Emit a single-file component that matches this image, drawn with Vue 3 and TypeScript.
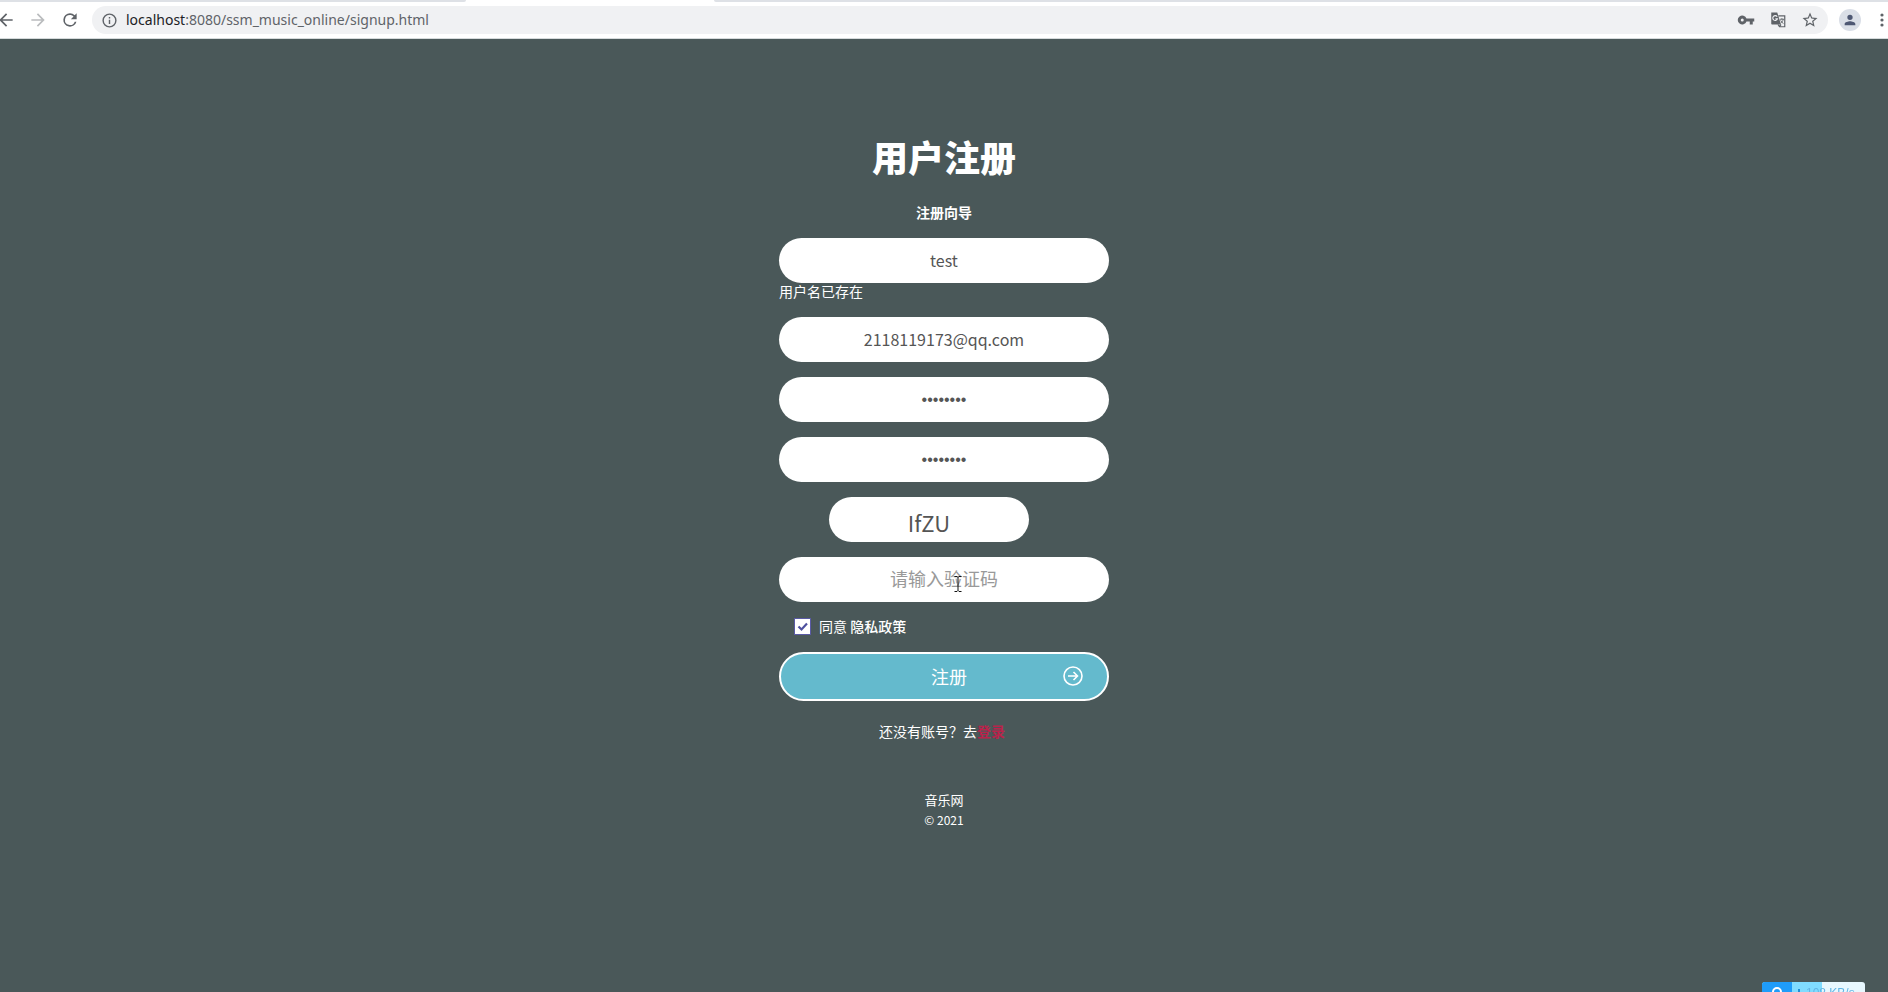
<script setup lang="ts">
import { ref } from 'vue'

const address = ref('localhost:8080/ssm_music_online/signup.html')
const username = ref('test')
const email = ref('2118119173@qq.com')
const password = ref('12345678')
const confirmation = ref('12345678')
const captcha = ref('IfZU')
const captchaInput = ref('')
const agreed = ref(true)

const host = address.value.split(':')[0]
const path = address.value.slice(host.length)
</script>

<template>
  <div class="window">
    <header class="browser">
      <div class="tabs"><span class="tab-before"></span><span class="tab-active"></span><span class="tab-after"></span></div>
      <nav class="toolbar">
        <button class="tool back" type="button" aria-label="Back">
          <svg viewBox="0 0 24 24"><path d="M20 11H7.8l5.6-5.6L12 4l-8 8 8 8 1.4-1.4L7.8 13H20z" /></svg>
        </button>
        <button class="tool forward" type="button" aria-label="Forward">
          <svg viewBox="0 0 24 24"><path d="M4 11h12.2l-5.6-5.6L12 4l8 8-8 8-1.4-1.4 5.6-5.6H4z" /></svg>
        </button>
        <button class="tool reload" type="button" aria-label="Reload">
          <svg viewBox="0 0 24 24"><path d="M17.65 6.35A7.95 7.95 0 0 0 12 4a8 8 0 1 0 7.73 10h-2.08A6 6 0 1 1 12 6c1.66 0 3.14.69 4.22 1.78L13 11h7V4z" /></svg>
        </button>
        <div class="omnibox">
          <svg class="info" viewBox="0 0 24 24"><path d="M11 17h2v-6h-2v6zm1-15a10 10 0 1 0 0 20 10 10 0 0 0 0-20zm0 18a8 8 0 1 1 0-16 8 8 0 0 1 0 16zM11 9h2V7h-2v2z" /></svg>
          <p class="url"><span class="host">{{ host }}</span>{{ path }}</p>
          <button class="tool" type="button" aria-label="Passwords">
            <svg viewBox="0 0 24 24"><path d="M12.65 10A6 6 0 1 0 12.65 14H17v4h4v-4h2v-4H12.65zM7 14a2 2 0 1 1 0-4 2 2 0 0 1 0 4z" /></svg>
          </button>
          <button class="tool" type="button" aria-label="Translate">
            <svg viewBox="0 0 24 24">
              <path d="M3 2h8l1.2 4H3zM3 2h8l5 16H4a1 1 0 0 1-1-1z" />
              <path d="M12.500 6.500H21v14.500h-7l-2-3M16 18l-2.500 3" class="translate-page" />
              <path d="M10.900 7.600A3.200 3.200 0 1 0 11.300 10.500H8.500" class="translate-g" />
              <path d="M14.500 11h5.500M17.200 9.500V11M19 11c-.5 2.500-1.800 4-3.200 5M15.500 12.500c.9 2 2.300 3.400 3.800 4.200" class="translate-x" />
            </svg>
          </button>
          <button class="tool" type="button" aria-label="Bookmark">
            <svg viewBox="0 0 24 24"><path d="M22 9.24l-7.19-.62L12 2 9.19 8.63 2 9.24l5.46 4.73L5.82 21 12 17.27 18.18 21l-1.63-7.03L22 9.24zM12 15.4l-3.76 2.27 1-4.28-3.32-2.88 4.38-.38L12 6.1l1.71 4.04 4.38.38-3.32 2.88 1 4.28L12 15.4z" /></svg>
          </button>
        </div>
        <button class="avatar" type="button" aria-label="Profile">
          <svg viewBox="0 0 24 24"><path d="M12 12a4 4 0 1 0 0-8 4 4 0 0 0 0 8zm0 2c-2.67 0-8 1.34-8 4v2h16v-2c0-2.66-5.33-4-8-4z" /></svg>
        </button>
        <button class="menu" type="button" aria-label="Menu">
          <svg viewBox="0 0 4 16"><circle cx="2" cy="3" r="1.6" /><circle cx="2" cy="8" r="1.6" /><circle cx="2" cy="13" r="1.6" /></svg>
        </button>
      </nav>
    </header>

    <main class="page">
      <h1>用户注册</h1>
      <form class="form" @submit.prevent>
        <p class="guide">注册向导</p>
        <div class="group">
          <input v-model="username" class="field" type="text" aria-label="用户名" />
          <p class="error">用户名已存在</p>
        </div>
        <input v-model="email" class="field" type="email" aria-label="邮箱" />
        <input v-model="password" class="field" type="password" aria-label="密码" />
        <input v-model="confirmation" class="field" type="password" aria-label="确认密码" />
        <button class="captcha" type="button">{{ captcha }}</button>
        <div class="group">
          <input v-model="captchaInput" class="field" type="text" placeholder="请输入验证码" aria-label="验证码" />
          <svg class="cursor" viewBox="0 0 8 16"><path d="M.5.5h2.5l1 1 1-1h2.5M4 1.5v13M.5 15.5h2.5l1-1 1 1h2.5" /></svg>
        </div>
        <div class="agree">
          <input id="agree" v-model="agreed" type="checkbox" />
          <label for="agree">同意 <a href="#">隐私政策</a></label>
        </div>
        <button class="submit" type="submit">
          <span>注册</span>
          <svg viewBox="0 0 20 20"><circle cx="10" cy="10" r="9" /><path d="M5 10h9.5M10.5 6l4 4-4 4" /></svg>
        </button>
        <p class="login">还没有账号？去<a href="#">登录</a></p>
      </form>
      <footer>
        <p class="site">音乐网</p>
        <p class="copyright">© 2021</p>
      </footer>
    </main>

    <aside class="speed">
      <span class="speed-icon"><svg viewBox="0 0 20 20"><circle cx="10" cy="8" r="4" /><path d="M6 11v6h8v-6" /></svg></span>
      <svg class="speed-arrow" viewBox="0 0 8 14"><path d="M4 0v11M1 8l3 3 3-3" /></svg>
      <span class="speed-text">108 KB/s</span>
    </aside>
  </div>
</template>

<style>
body {
  margin: 0;
  background: #4a5859;
}
</style>

<style scoped>
* {
  box-sizing: border-box;
}

p,
h1 {
  margin: 0;
}

button {
  border: 0;
  padding: 0;
  background: none;
  font-family: inherit;
}

a {
  color: inherit;
  text-decoration: none;
}

svg {
  display: block;
  fill: currentColor;
}

.window {
  min-height: 100vh;
  background: #4a5859;
  color: #fff;
  font-family: "Noto Sans CJK SC", sans-serif;
}

.browser {
  background: #fff;
  border-bottom: 1px solid #d5dadb;
  color: #5f6368;
}

.tabs {
  display: flex;
  height: 2px;
  background: #fff;
}

.tab-before {
  width: 466px;
  background: #dee1e6;
  border-bottom-right-radius: 2px;
}

.tab-active {
  width: 248px;
}

.tab-after {
  flex: 1;
  background: #dee1e6;
  border-bottom-left-radius: 2px;
}

.toolbar {
  display: flex;
  align-items: center;
  height: 36px;
}

.tool {
  flex: none;
  width: 20px;
  color: #5f6368;
}

.tool svg {
  width: 100%;
}

.back {
  margin-left: -4px;
}

.forward {
  margin-left: 12px;
  color: #babcbe;
}

.reload {
  margin-left: 12px;
}

.omnibox {
  display: flex;
  flex: 1;
  align-items: center;
  gap: 14px;
  height: 28px;
  margin-left: 12px;
  padding: 0 9px;
  border-radius: 14px;
  background: #f0f1f3;
}

.omnibox .tool {
  width: 18px;
}

.translate-page {
  fill: none;
  stroke: currentColor;
  stroke-width: 1.6;
}

.translate-g {
  fill: none;
  stroke: #f0f1f3;
  stroke-width: 1.5;
}

.translate-x {
  fill: none;
  stroke: currentColor;
  stroke-width: 1.2;
}

.info {
  width: 17px;
}

.url {
  flex: 1;
  margin-left: -6px;
  padding-bottom: 1px;
  font: 14px/20px "Noto Sans", sans-serif;
}

.host {
  color: #202124;
}

.avatar {
  width: 22px;
  height: 22px;
  margin-left: 11px;
  padding: 3px;
  border-radius: 50%;
  background: #dadfe7;
  color: #4e5873;
}

.menu {
  width: 4px;
  margin: 0 4px 0 19px;
  color: #5f6368;
}

.page {
  display: flex;
  flex-direction: column;
  align-items: center;
  padding: 92px 16px 32px;
}

h1 {
  font-size: 36px;
  line-height: 50px;
  font-weight: 900;
}

.form {
  display: flex;
  flex-direction: column;
  gap: 15px;
  width: 100%;
  max-width: 330px;
  margin-top: 21px;
}

.guide {
  padding-bottom: 1px;
  font-size: 14px;
  line-height: 20px;
  font-weight: 700;
  text-align: center;
}

.group {
  position: relative;
}

.field {
  display: block;
  width: 100%;
  height: 45px;
  border: 0;
  border-radius: 23px;
  outline: 0;
  padding: 0 20px 2px;
  background: #fff;
  color: #555;
  font-family: inherit;
  font-size: 16px;
  text-align: center;
}

.field[type="password"] {
  padding-bottom: 0;
  font-family: "Liberation Sans", sans-serif;
}

.field::placeholder {
  color: #999;
  font-size: 18px;
}

.error {
  font-size: 14px;
  line-height: 17px;
  padding-bottom: 2px;
}

.captcha {
  width: 200px;
  height: 45px;
  margin-left: 50px;
  padding-top: 5px;
  border-radius: 23px;
  background: #fff;
  color: #555;
  font-size: 22px;
  line-height: 40px;
}

.cursor {
  position: absolute;
  left: 175px;
  top: 19px;
  width: 8px;
  height: 16px;
  fill: none;
  stroke: #111;
}

.agree {
  display: flex;
  align-items: center;
  gap: 8px;
  height: 20px;
  padding: 0 0 2px 15px;
  font-size: 14px;
  line-height: 20px;
}

.agree input {
  appearance: none;
  width: 17px;
  height: 17px;
  margin: 0;
  border: 1px solid #5a5aa5;
  background: #fff url("data:image/svg+xml,%3Csvg xmlns='http://www.w3.org/2000/svg' viewBox='0 0 15 15'%3E%3Cpath d='M3.5 7.5l3 3 5.500-6' fill='none' stroke='%234f519f' stroke-width='2.200'/%3E%3C/svg%3E") center / 15px no-repeat;
}

.agree a {
  font-weight: 500;
}

.submit {
  display: grid;
  grid-template-columns: 1fr auto 1fr;
  align-items: center;
  height: 49px;
  padding: 0 24px 2px 34px;
  border: 2px solid #fff;
  border-radius: 25px;
  background: #64bacd;
  color: #fff;
  font-size: 18px;
}

.submit span {
  grid-column: 2;
}

.submit svg {
  justify-self: end;
  width: 20px;
  fill: none;
  stroke: currentColor;
  stroke-width: 1.6;
}

.login {
  margin-top: 5px;
  padding-right: 4px;
  font-size: 14px;
  line-height: 20px;
  text-align: center;
}

.login a {
  color: #b9234b;
  font-weight: 700;
}

footer {
  margin-top: 49px;
  text-align: center;
}

.site {
  font-size: 13px;
  line-height: 20px;
}

.copyright {
  font-size: 12px;
  line-height: 20px;
}

.speed {
  position: fixed;
  right: 23px;
  bottom: 0;
  display: flex;
  width: 103px;
  height: 10px;
  overflow: hidden;
  border-radius: 3px 3px 0 0;
  background: linear-gradient(90deg, #80dcff 60px, #e8f8ff 60px);
  color: #62b5e5;
}

.speed-icon {
  width: 30px;
  height: 20px;
  padding: 2px 5px;
  background: #1f9cf9;
  color: #fff;
}

.speed-icon svg {
  width: 20px;
  fill: none;
  stroke: currentColor;
  stroke-width: 2;
}

.speed-arrow {
  width: 8px;
  height: 14px;
  margin: 7px 3px 0;
  fill: none;
  stroke: #1f8fd8;
  stroke-width: 2;
}

.speed-text {
  flex: 1;
  font: 12px/22px "Liberation Sans", sans-serif;
  white-space: nowrap;
}
</style>
